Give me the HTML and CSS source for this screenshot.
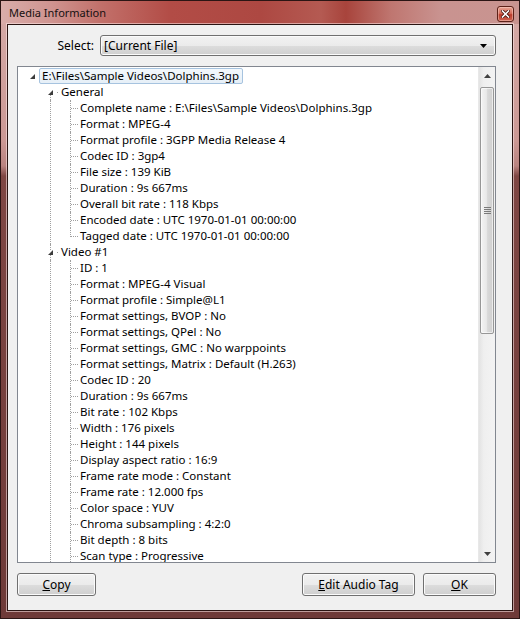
FILE: index.html
```html
<!DOCTYPE html>
<html>
<head>
<meta charset="utf-8">
<title>Media Information</title>
<link rel="stylesheet" href="styles.css">
</head>
<body>
<div class="window">
  <div class="titlebar">
    <span class="title">Media Information</span>
    <div class="close">
      <svg width="9" height="8" viewBox="0 0 9 8"><path d="M1.5 1 L7.5 7 M7.5 1 L1.5 7" stroke="#4a1810" stroke-width="3.2" stroke-linecap="square"/><path d="M1.5 1 L7.5 7 M7.5 1 L1.5 7" stroke="#ffffff" stroke-width="1.6" stroke-linecap="square"/></svg>
    </div>
  </div>
  <div class="client">
    <div class="select-row">
      <label class="select-label">Select:</label>
      <div class="combo">
        <span>[Current File]</span>
        <svg class="combo-arrow" width="7" height="4" viewBox="0 0 7 4"><polygon points="0,0 7,0 3.5,4" fill="#000"/></svg>
      </div>
    </div>
    <div class="tree">
      <div class="tree-content">
        <div class="row r0"><svg class="tri" width="5" height="5" viewBox="0 0 5 5"><polygon points="5,0 5,5 0,5" fill="#3c3c3c"/></svg><span class="sel">E:\Files\Sample Videos\Dolphins.3gp</span></div>

        <div class="row r1 first"><svg class="tri" width="5" height="5" viewBox="0 0 5 5"><polygon points="5,0 5,5 0,5" fill="#3c3c3c"/></svg><span class="hstub"></span>General</div>
        <div class="kids">
          <div class="row r2">Complete name : E:\Files\Sample Videos\Dolphins.3gp</div>
          <div class="row r2">Format : MPEG-4</div>
          <div class="row r2">Format profile : 3GPP Media Release 4</div>
          <div class="row r2">Codec ID : 3gp4</div>
          <div class="row r2">File size : 139 KiB</div>
          <div class="row r2">Duration : 9s 667ms</div>
          <div class="row r2">Overall bit rate : 118 Kbps</div>
          <div class="row r2">Encoded date : UTC 1970-01-01 00:00:00</div>
          <div class="row r2">Tagged date : UTC 1970-01-01 00:00:00</div>
        </div>

        <div class="row r1"><svg class="tri" width="5" height="5" viewBox="0 0 5 5"><polygon points="5,0 5,5 0,5" fill="#3c3c3c"/></svg><span class="hstub"></span>Video #1</div>
        <div class="kids more">
          <div class="row r2">ID : 1</div>
          <div class="row r2">Format : MPEG-4 Visual</div>
          <div class="row r2">Format profile : Simple@L1</div>
          <div class="row r2">Format settings, BVOP : No</div>
          <div class="row r2">Format settings, QPel : No</div>
          <div class="row r2">Format settings, GMC : No warppoints</div>
          <div class="row r2">Format settings, Matrix : Default (H.263)</div>
          <div class="row r2">Codec ID : 20</div>
          <div class="row r2">Duration : 9s 667ms</div>
          <div class="row r2">Bit rate : 102 Kbps</div>
          <div class="row r2">Width : 176 pixels</div>
          <div class="row r2">Height : 144 pixels</div>
          <div class="row r2">Display aspect ratio : 16:9</div>
          <div class="row r2">Frame rate mode : Constant</div>
          <div class="row r2">Frame rate : 12.000 fps</div>
          <div class="row r2">Color space : YUV</div>
          <div class="row r2">Chroma subsampling : 4:2:0</div>
          <div class="row r2">Bit depth : 8 bits</div>
          <div class="row r2">Scan type : Progressive</div>
        </div>
      </div>
      <div class="scrollbar">
        <div class="sb-btn"><svg width="7" height="4" viewBox="0 0 7 4"><polygon points="3.5,0 7,4 0,4" fill="#404040"/></svg></div>
        <div class="sb-thumb">
          <svg width="7" height="7" viewBox="0 0 7 7"><path d="M0 0.5H7M0 2.5H7M0 4.5H7M0 6.5H7" stroke="#7a7a7a" stroke-width="1"/></svg>
        </div>
        <div class="sb-track"></div>
        <div class="sb-btn"><svg width="7" height="4" viewBox="0 0 7 4"><polygon points="0,0 7,0 3.5,4" fill="#404040"/></svg></div>
      </div>
    </div>
    <div class="buttons">
      <div class="btn btn-copy"><u>C</u>opy</div>
      <div class="spacer"></div>
      <div class="btn btn-edit"><u>E</u>dit Audio Tag</div>
      <div class="btn btn-ok"><u>O</u>K</div>
    </div>
  </div>
</div>
</body>
</html>
```
FILE: styles.css
```css
* { box-sizing: border-box; }
html, body { margin: 0; padding: 0; }
body {
  width: 520px;
  height: 619px;
  overflow: hidden;
  font-family: "Noto Sans", "Open Sans", sans-serif;
  font-size: 11.5px;
  color: #000;
}
.window {
  width: 520px;
  height: 619px;
  display: flex;
  flex-direction: column;
  border: 1px solid #2b1514;
  background: linear-gradient(180deg, #d6aba8 0, #cb9894 140px, #b98380 165px, #7f4744 175px, #6e3a38 100%);
}
.titlebar {
  height: 23px;
  flex: none;
  display: flex;
  align-items: center;
  justify-content: space-between;
  padding: 0 5px 0 8px;
  background: linear-gradient(90deg, #d9adaa 0, #cf9490 50px, #c2706a 100px, #b24c46 170px, #ad4842 260px, #b45a52 320px, #a8443c 345px, #bf7670 390px, #c99390 440px, #c89490 520px);
}
.title {
  color: #151010;
  font-size: 11px;
  line-height: 16px;
}
.close {
  width: 17px;
  height: 16px;
  margin-top: 2px;
  border: 1px solid #5c2118;
  border-radius: 3px;
  background: linear-gradient(180deg, #e6a393 0, #d66e5c 45%, #bb3b2b 55%, #cf6552 100%);
  box-shadow: inset 0 0 0 1px rgba(255, 220, 210, 0.45);
  display: flex;
  align-items: center;
  justify-content: center;
}
.client {
  flex: 1;
  min-height: 0;
  margin: 0 6px 7px 6px;
  border: 1px solid #2a1412;
  box-shadow: 0 0 0 1px rgba(255, 235, 235, 0.55);
  background: #f0f0f0;
  display: flex;
  flex-direction: column;
  gap: 10px;
  padding: 10px 16px 14px 9px;
}
.select-row {
  display: flex;
  align-items: center;
  gap: 6px;
  height: 21px;
  flex: none;
  font-size: 12px;
}
.select-label {
  width: 77px;
  text-align: right;
}
.combo {
  flex: 1;
  height: 21px;
  border: 1px solid #707070;
  border-radius: 3px;
  background: linear-gradient(180deg, #f2f2f2 0, #ebebeb 50%, #dddddd 51%, #cfcfcf 100%);
  box-shadow: inset 0 0 0 1px #fbfbfb;
  display: flex;
  align-items: center;
  justify-content: space-between;
  padding: 0 8px 0 3px;
  line-height: 16px;
}
.tree {
  flex: 1;
  border: 1px solid #828790;
  background: #fff;
  display: flex;
  min-height: 0;
  overflow: hidden;
}
.tree-content {
  flex: 1;
  min-height: 0;
  overflow: hidden;
  padding-top: 1px;
}
.row {
  height: 16px;
  line-height: 16px;
  display: flex;
  align-items: center;
  white-space: nowrap;
  position: relative;
}
.tri {
  flex: none;
  position: relative;
  z-index: 1;
  background: #fff;
}
.r0 { padding-left: 12px; }
.r0 .tri { margin-right: 4px; margin-top: 1px; }
.sel {
  border: 1px solid #a6c3df;
  background: linear-gradient(180deg, #f3f8fc, #e6eff7);
  border-radius: 2px;
  padding: 0 3px 0 2px;
  height: 16px;
  line-height: 14px;
}
.r1 { padding-left: 30px; }
.r1 .tri { margin-top: 1px; }
.r1::before {
  content: "";
  position: absolute;
  left: 32px;
  top: 0;
  bottom: 0;
  border-left: 1px dotted #a0a0a0;
}
.r1.first::before { top: 11px; }
.hstub {
  width: 8px;
  height: 1px;
  flex: none;
  background: linear-gradient(90deg, transparent 4px, #a0a0a0 4px, #a0a0a0 5px, transparent 5px);
}
.kids { position: relative; }
.kids::before {
  content: "";
  position: absolute;
  left: 32px;
  top: 0;
  bottom: 0;
  border-left: 1px dotted #a0a0a0;
}
.r2 { padding-left: 62px; }
.r2::before {
  content: "";
  position: absolute;
  left: 52px;
  top: 0;
  bottom: 0;
  border-left: 1px dotted #a0a0a0;
}
.r2::after {
  content: "";
  position: absolute;
  left: 53px;
  top: 8px;
  width: 7px;
  border-top: 1px dotted #a0a0a0;
}
.kids:not(.more) .r2:last-child::before { bottom: auto; height: 9px; }
.kids.more { padding-bottom: 16px; }
.scrollbar {
  width: 17px;
  flex: none;
  background: linear-gradient(90deg, #e3e3e3, #efefef 30%, #f3f3f3);
  border-left: 1px solid #e8e8e8;
  display: flex;
  flex-direction: column;
}
.sb-btn {
  height: 17px;
  flex: none;
  display: flex;
  align-items: center;
  justify-content: center;
}
.sb-thumb {
  height: 247px;
  margin: 3px 1px 0 1px;
  flex: none;
  border: 1px solid #979797;
  border-radius: 2px;
  background: linear-gradient(90deg, #f4f4f4 0, #e9e9e9 45%, #d9d9d9 55%, #cfcfcf 100%);
  box-shadow: inset 0 0 0 1px rgba(255,255,255,0.6);
  display: flex;
  align-items: center;
  justify-content: center;
}
.sb-track { flex: 1; min-height: 0; }
.buttons {
  display: flex;
  height: 23px;
  flex: none;
  font-size: 12px;
}
.spacer { flex: 1; }
.btn {
  height: 23px;
  border: 1px solid #707070;
  border-radius: 3px;
  background: linear-gradient(180deg, #f2f2f2 0, #ebebeb 50%, #dddddd 51%, #cfcfcf 100%);
  box-shadow: inset 0 0 0 1px #fbfbfb;
  display: flex;
  align-items: center;
  justify-content: center;
  line-height: 16px;
}
.btn-copy { width: 79px; }
.btn-edit { width: 113px; margin-right: 8px; }
.btn-ok { width: 73px; }
```
